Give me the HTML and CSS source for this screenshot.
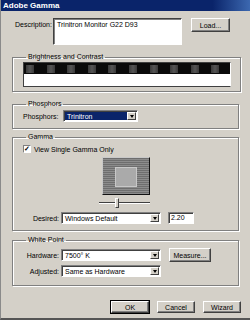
FILE: index.html
```html
<!DOCTYPE html>
<html lang="en">
<head>
    <meta charset="UTF-8">
    <title>Adobe Gamma</title>
    <link rel="stylesheet" href="styles.css">
</head>
<body>
    <div class="window">
        <div class="titlebar">Adobe Gamma</div>

        <!-- описание профиля -->
        <div class="desc-row">
            <span class="desc-label">Description:</span>
            <div class="textbox">Trinitron Monitor G22 D93</div>
            <button class="btn btn-load">Load...</button>
        </div>

        <!-- яркость и контраст -->
        <fieldset class="group group-bright">
            <legend>Brightness and Contrast</legend>
            <div class="bars">
                <div class="bar-black">
                    <span></span><span></span><span></span><span></span><span></span>
                    <span></span><span></span><span></span><span></span><span></span>
                </div>
                <div class="bar-white"></div>
            </div>
        </fieldset>

        <!-- люминофоры -->
        <fieldset class="group group-phos">
            <legend>Phosphors</legend>
            <div class="row">
                <span class="lbl lbl-phos">Phosphors:</span>
                <div class="combo combo-phos selected">
                    <span class="combo-text">Trinitron</span>
                    <span class="combo-arrow"></span>
                </div>
            </div>
        </fieldset>

        <!-- гамма -->
        <fieldset class="group group-gamma">
            <legend>Gamma</legend>
            <div class="check-row">
                <span class="checkbox">&#10003;</span>
                <span>View Single Gamma Only</span>
            </div>
            <div class="gamma-box">
                <div class="gamma-inner"></div>
            </div>
            <div class="slider">
                <div class="slider-track"></div>
                <div class="slider-thumb"></div>
            </div>
            <div class="row row-desired">
                <span class="lbl">Desired:</span>
                <div class="combo combo-wide">
                    <span class="combo-text">Windows Default</span>
                    <span class="combo-arrow"></span>
                </div>
                <div class="edit">2.20</div>
            </div>
        </fieldset>

        <!-- точка белого -->
        <fieldset class="group group-white">
            <legend>White Point</legend>
            <div class="row row-hw">
                <span class="lbl">Hardware:</span>
                <div class="combo combo-wide">
                    <span class="combo-text">7500&deg; K</span>
                    <span class="combo-arrow"></span>
                </div>
                <button class="btn btn-measure">Measure...</button>
            </div>
            <div class="row row-adj">
                <span class="lbl">Adjusted:</span>
                <div class="combo combo-wide">
                    <span class="combo-text">Same as Hardware</span>
                    <span class="combo-arrow"></span>
                </div>
            </div>
        </fieldset>

        <!-- кнопки -->
        <div class="buttons">
            <button class="btn btn-ok">OK</button>
            <button class="btn">Cancel</button>
            <button class="btn">Wizard</button>
        </div>
    </div>
</body>
</html>
```

FILE: styles.css
```css
* {
    margin: 0;
    padding: 0;
    box-sizing: border-box;
}

body {
    background-color: #d4d0c8;
    font-family: "Liberation Sans", Arial, sans-serif;
    font-size: 7px;
    color: #000;
}

.window {
    width: 250px;
    height: 320px;
    background-color: #d4d0c8;
    border-left: 1px solid #8a8a8a;
    border-bottom: 2px solid #555;
    overflow: hidden;
}

/* Заголовок окна */
.titlebar {
    height: 11px;
    line-height: 11px;
    padding-left: 2px;
    background: linear-gradient(to right, #0a246a 0%, #0a246a 85%, #3c68b0 100%);
    color: white;
    font-weight: bold;
    font-size: 8px;
}

/* Описание */
.desc-row {
    display: flex;
    align-items: flex-start;
    margin: 7px 0 0 14px;
    height: 27px;
}
.desc-label {
    width: 38px;
    padding-top: 3px;
}
.textbox {
    width: 129px;
    height: 27px;
    background: white;
    border: 1px solid;
    border-color: #404040 #fff #fff #404040;
    box-shadow: inset 1px 1px 0 #808080;
    padding: 2px 0 0 3px;
}
.btn-load {
    margin-left: 9px;
    width: 39px;
    height: 14px;
}

/* Кнопки */
.btn {
    font-family: inherit;
    font-size: 7px;
    background: #d4d0c8;
    border: 1px solid;
    border-color: #fff #404040 #404040 #fff;
    box-shadow: inset -1px -1px 0 #808080;
    color: #000;
}

/* Группы */
.group {
    margin: 0 11px;
    border: 1px solid #808080;
    box-shadow: 1px 1px 0 #fff, inset 1px 1px 0 #fff;
    padding: 0 9px 0 10px;
}
.group legend {
    line-height: 8px;
    margin-left: 3px;
    padding: 0 2px;
}

.group-bright {
    margin-top: 8px;
    padding-top: 1px;
    padding-bottom: 4px;
}
.bars {
    border: 1px solid #404040;
    border-right-color: #fff;
    width: 208px;
}
.bar-black {
    height: 11px;
    background: #0a0a0a;
    display: grid;
    grid-template-columns: repeat(10, 1fr);
    align-items: center;
}
.bar-black span {
    width: 8px;
    height: 8px;
    margin-left: 2px;
    background: linear-gradient(to right, #3a3a3a, #555 50%, #3a3a3a);
}
.bar-white {
    height: 12px;
    background: white;
}

.row {
    display: flex;
    align-items: center;
}
.lbl {
    width: 38px;
    text-align: right;
    padding-right: 2px;
}
.lbl-phos {
    width: 40px;
    text-align: left;
}

.group-phos {
    margin-top: 8px;
    padding-top: 2px;
    padding-bottom: 6px;
}

/* Выпадающие списки */
.combo {
    height: 12px;
    display: flex;
    background: white;
    border: 1px solid;
    border-color: #808080 #fff #fff #808080;
    box-shadow: inset 1px 1px 0 #404040;
    padding: 1px;
}
.combo-text {
    flex: 1;
    line-height: 9px;
    padding-left: 2px;
    white-space: nowrap;
}
.combo.selected .combo-text {
    background: #0a246a;
    color: white;
}
.combo-arrow {
    width: 9px;
    background: #d4d0c8;
    border: 1px solid;
    border-color: #fff #404040 #404040 #fff;
    display: flex;
    align-items: center;
    justify-content: center;
}
.combo-arrow::after {
    content: "";
    border-left: 2.5px solid transparent;
    border-right: 2.5px solid transparent;
    border-top: 3px solid #000;
}
.combo-phos {
    width: 75px;
}
.combo-wide {
    width: 100px;
}

.group-gamma {
    margin-top: 4px;
    padding-top: 4px;
    padding-bottom: 6px;
}
.check-row {
    display: flex;
    align-items: center;
    gap: 3px;
    height: 8px;
}
.checkbox {
    width: 8px;
    height: 8px;
    background: white;
    border: 1px solid;
    border-color: #808080 #fff #fff #808080;
    font-size: 7px;
    line-height: 6px;
    text-align: center;
    font-weight: bold;
}

/* Картинка гаммы */
.gamma-box {
    width: 48px;
    height: 38px;
    margin: 4px auto 0;
    padding-top: 9px;
    background: repeating-linear-gradient(to bottom, #6e6e6e 0, #6e6e6e 1px, #8c8c8c 1px, #8c8c8c 2px);
    border: 1px solid;
    border-color: #c8c8c8 #111 #111 #c8c8c8;
}
.gamma-inner {
    width: 22px;
    height: 20px;
    margin-left: 12px;
    background: #aaa;
    border: 1px solid #c8c8c8;
}
.slider {
    position: relative;
    width: 51px;
    height: 10px;
    margin: 3px auto 0;
    left: -2px;
}
.slider-track {
    position: absolute;
    top: 4px;
    left: 0;
    right: 0;
    height: 2px;
    border-top: 1px solid #404040;
    border-bottom: 1px solid #fff;
}
.slider-thumb {
    position: absolute;
    left: 16px;
    top: 0;
    width: 4px;
    height: 10px;
    background: #d4d0c8;
    border: 1px solid;
    border-color: #fff #404040 #404040 #fff;
}
.row-desired {
    margin-top: 4px;
}
.edit {
    margin-left: 7px;
    width: 26px;
    height: 12px;
    background: white;
    border: 1px solid;
    border-color: #808080 #fff #fff #808080;
    box-shadow: inset 1px 1px 0 #404040;
    line-height: 10px;
    padding-left: 2px;
}

.group-white {
    margin-top: 5px;
    padding-top: 4px;
    padding-bottom: 8px;
}
.row-hw {
    height: 14px;
}
.btn-measure {
    margin-left: 8px;
    width: 42px;
    height: 14px;
}
.row-adj {
    margin-top: 3px;
}

/* Нижние кнопки */
.buttons {
    display: flex;
    justify-content: flex-end;
    gap: 8px;
    margin: 15px 9px 0 0;
}
.buttons .btn {
    width: 38px;
    height: 12px;
}
.btn-ok {
    outline: 1px solid #000;
}
```
